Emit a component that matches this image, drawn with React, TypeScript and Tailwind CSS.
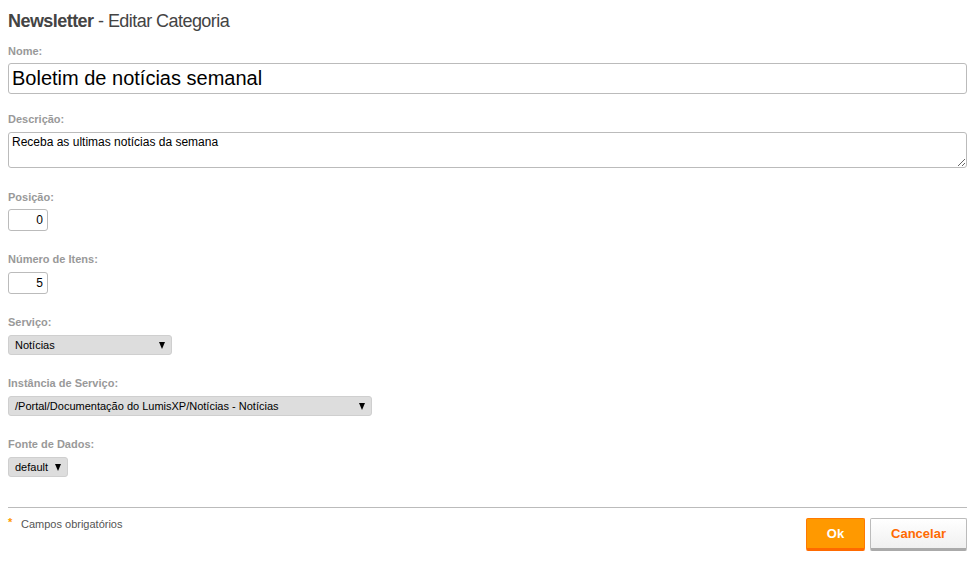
import React from "react";

const FONT = "font-['Liberation_Sans',Arial,sans-serif]";

function Label({ children }: { children: React.ReactNode }) {
  return <div className="text-[11px] leading-[13px] font-bold text-[#999]">{children}</div>;
}

function FakeSelect({ value, width }: { value: string; width: string }) {
  return (
    <div className={`${width} h-[20px] flex items-center justify-between pl-[6px] pr-[6px] bg-[#dddddd] border border-[#cfcfcf] rounded-[3px] text-[11px] text-black`}>
      <span>{value}</span>
      <svg width="6" height="7" viewBox="0 0 6 7" className="shrink-0">
        <polygon points="0,0 6,0 3,7" fill="#000" />
      </svg>
    </div>
  );
}

export default function App() {
  return (
    <div className={`${FONT} bg-white min-h-[584px] px-2 pt-[10px]`}>
      <h1 className="text-[18px] leading-[22px] text-[#444] tracking-[-0.55px]">
        <span className="font-bold">Newsletter</span> - Editar Categoria
      </h1>

      <div className="mt-[13px]">
        <Label>Nome:</Label>
        <input
          defaultValue="Boletim de notícias semanal"
          className="mt-[5px] w-full h-[31px] px-[3px] border border-[#bbb] rounded-[3px] text-[20px] text-black outline-none"
        />
      </div>

      <div className="mt-[19px]">
        <Label>Descrição:</Label>
        <textarea
          defaultValue="Receba as ultimas notícias da semana"
          className="mt-[6px] block w-full h-[36px] px-[3px] py-[2px] border border-[#bbb] rounded-[3px] text-[12px] leading-[15px] text-black outline-none"
        />
      </div>

      <div className="mt-[23px]">
        <Label>Posição:</Label>
        <input
          defaultValue="0"
          className="mt-[5px] block w-[40px] h-[22px] px-[4px] border border-[#bbb] rounded-[3px] text-[12px] text-right text-black outline-none"
        />
      </div>

      <div className="mt-[22px]">
        <Label>Número de Itens:</Label>
        <input
          defaultValue="5"
          className="mt-[6px] block w-[40px] h-[22px] px-[4px] border border-[#bbb] rounded-[3px] text-[12px] text-right text-black outline-none"
        />
      </div>

      <div className="mt-[22px]">
        <Label>Serviço:</Label>
        <div className="mt-[6px]">
          <FakeSelect value="Notícias" width="w-[164px]" />
        </div>
      </div>

      <div className="mt-[22px]">
        <Label>Instância de Serviço:</Label>
        <div className="mt-[6px]">
          <FakeSelect value="/Portal/Documentação do LumisXP/Notícias - Notícias" width="w-[364px]" />
        </div>
      </div>

      <div className="mt-[22px]">
        <Label>Fonte de Dados:</Label>
        <div className="mt-[6px]">
          <FakeSelect value="default" width="w-[60px]" />
        </div>
      </div>

      <div className="mt-[30px] border-t border-[#bbb]" />

      <div className="flex justify-between items-start pt-[10px]">
        <div className="flex items-start -mt-[1px] text-[11px] leading-[13px] text-[#555]">
          <span className="text-[#f90] text-[11px] font-bold w-[13px] leading-[11px]">*</span>
          <span className="mt-[1px]">Campos obrigatórios</span>
        </div>
        <div className="flex gap-[5px]">
          <button className="w-[59px] h-[33px] bg-[#ff9900] border border-[#ff7a00] border-b-[3px] border-b-[#ff6a00] rounded-[2px] text-white text-[13px] font-bold">
            Ok
          </button>
          <button className="w-[97px] h-[33px] bg-gradient-to-b from-white to-[#f0f0f0] border border-[#bbb] border-b-[3px] border-b-[#aaa] rounded-[2px] text-[#ff6a00] text-[13px] font-bold">
            Cancelar
          </button>
        </div>
      </div>
    </div>
  );
}
